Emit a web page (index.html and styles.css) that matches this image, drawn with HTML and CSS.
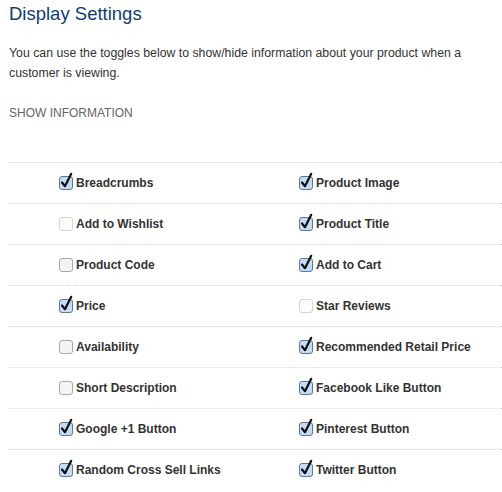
FILE: index.html
```html
<!DOCTYPE html>
<html>
<head>
<meta charset="utf-8">
<link rel="stylesheet" href="styles.css">
</head>
<body>
<div class="page">
  <h1 class="title">Display Settings</h1>
  <p class="intro">You can use the toggles below to show/hide information about your product when a customer is viewing.</p>
  <h2 class="section">SHOW INFORMATION</h2>
  <div class="options">
    <div class="row">
      <div class="cell"><span class="cb on"><svg viewBox="0 0 14 18" width="14" height="18"><rect x="0.5" y="4.5" width="13" height="13" rx="2.5" class="box"/><path d="M3 10.5 L6 14.2 L12.2 1.8" class="tick"/></svg></span>Breadcrumbs</div>
      <div class="cell"><span class="cb on"><svg viewBox="0 0 14 18" width="14" height="18"><rect x="0.5" y="4.5" width="13" height="13" rx="2.5" class="box"/><path d="M3 10.5 L6 14.2 L12.2 1.8" class="tick"/></svg></span>Product Image</div>
    </div>
    <div class="row">
      <div class="cell"><span class="cb dis"><svg viewBox="0 0 14 18" width="14" height="18"><rect x="0.5" y="4.5" width="13" height="13" rx="2.5" class="box"/></svg></span>Add to Wishlist</div>
      <div class="cell"><span class="cb on"><svg viewBox="0 0 14 18" width="14" height="18"><rect x="0.5" y="4.5" width="13" height="13" rx="2.5" class="box"/><path d="M3 10.5 L6 14.2 L12.2 1.8" class="tick"/></svg></span>Product Title</div>
    </div>
    <div class="row">
      <div class="cell"><span class="cb off"><svg viewBox="0 0 14 18" width="14" height="18"><rect x="0.5" y="4.5" width="13" height="13" rx="2.5" class="box"/></svg></span>Product Code</div>
      <div class="cell"><span class="cb on"><svg viewBox="0 0 14 18" width="14" height="18"><rect x="0.5" y="4.5" width="13" height="13" rx="2.5" class="box"/><path d="M3 10.5 L6 14.2 L12.2 1.8" class="tick"/></svg></span>Add to Cart</div>
    </div>
    <div class="row">
      <div class="cell"><span class="cb on"><svg viewBox="0 0 14 18" width="14" height="18"><rect x="0.5" y="4.5" width="13" height="13" rx="2.5" class="box"/><path d="M3 10.5 L6 14.2 L12.2 1.8" class="tick"/></svg></span>Price</div>
      <div class="cell"><span class="cb dis"><svg viewBox="0 0 14 18" width="14" height="18"><rect x="0.5" y="4.5" width="13" height="13" rx="2.5" class="box"/></svg></span>Star Reviews</div>
    </div>
    <div class="row">
      <div class="cell"><span class="cb off"><svg viewBox="0 0 14 18" width="14" height="18"><rect x="0.5" y="4.5" width="13" height="13" rx="2.5" class="box"/></svg></span>Availability</div>
      <div class="cell"><span class="cb on"><svg viewBox="0 0 14 18" width="14" height="18"><rect x="0.5" y="4.5" width="13" height="13" rx="2.5" class="box"/><path d="M3 10.5 L6 14.2 L12.2 1.8" class="tick"/></svg></span>Recommended Retail Price</div>
    </div>
    <div class="row">
      <div class="cell"><span class="cb off"><svg viewBox="0 0 14 18" width="14" height="18"><rect x="0.5" y="4.5" width="13" height="13" rx="2.5" class="box"/></svg></span>Short Description</div>
      <div class="cell"><span class="cb on"><svg viewBox="0 0 14 18" width="14" height="18"><rect x="0.5" y="4.5" width="13" height="13" rx="2.5" class="box"/><path d="M3 10.5 L6 14.2 L12.2 1.8" class="tick"/></svg></span>Facebook Like Button</div>
    </div>
    <div class="row">
      <div class="cell"><span class="cb on"><svg viewBox="0 0 14 18" width="14" height="18"><rect x="0.5" y="4.5" width="13" height="13" rx="2.5" class="box"/><path d="M3 10.5 L6 14.2 L12.2 1.8" class="tick"/></svg></span>Google +1 Button</div>
      <div class="cell"><span class="cb on"><svg viewBox="0 0 14 18" width="14" height="18"><rect x="0.5" y="4.5" width="13" height="13" rx="2.5" class="box"/><path d="M3 10.5 L6 14.2 L12.2 1.8" class="tick"/></svg></span>Pinterest Button</div>
    </div>
    <div class="row">
      <div class="cell"><span class="cb on"><svg viewBox="0 0 14 18" width="14" height="18"><rect x="0.5" y="4.5" width="13" height="13" rx="2.5" class="box"/><path d="M3 10.5 L6 14.2 L12.2 1.8" class="tick"/></svg></span>Random Cross Sell Links</div>
      <div class="cell"><span class="cb on"><svg viewBox="0 0 14 18" width="14" height="18"><rect x="0.5" y="4.5" width="13" height="13" rx="2.5" class="box"/><path d="M3 10.5 L6 14.2 L12.2 1.8" class="tick"/></svg></span>Twitter Button</div>
    </div>
  </div>
</div>
</body>
</html>
```
FILE: styles.css
```css
html, body {
  margin: 0;
  padding: 0;
  background: #fff;
}
.page {
  padding: 0 0 0 9px;
  font-family: "Liberation Sans", Arial, sans-serif;
  color: #333;
}
.title {
  margin: 0;
  padding-top: 3px;
  font-size: 18.5px;
  line-height: 22px;
  font-weight: normal;
  color: #0f3c6f;
}
.intro {
  margin: 18px 0 0 0;
  font-size: 12.3px;
  line-height: 20px;
  padding-right: 20px;
}
.section {
  margin: 20px 0 0 0;
  font-size: 12px;
  line-height: 20px;
  font-weight: normal;
  color: #666;
}
.options {
  margin-top: 39px;
  border-top: 1px dotted #d6d6d6;
}
.row {
  display: grid;
  grid-template-columns: 240px 1fr;
  height: 40px;
  align-items: center;
  border-bottom: 1px dotted #d6d6d6;
}
.row:last-child {
  border-bottom: none;
}
.cell {
  display: flex;
  align-items: center;
  padding-left: 50px;
  font-size: 12px;
  font-weight: bold;
  color: #333;
}
.cb {
  display: inline-flex;
  width: 14px;
  height: 18px;
  margin-right: 3px;
  margin-top: -5px;
}
.cb svg {
  overflow: visible;
}
.cb .box {
  fill: #f4f4f4;
  stroke: #a9a9a9;
  stroke-width: 1;
}
.cb.dis .box {
  fill: #fbfbfb;
  stroke: #d4d4d4;
}
.cb.on .box {
  fill: #c5dcf5;
  stroke: #5b7898;
}
.cb .tick {
  fill: none;
  stroke: #111;
  stroke-width: 2.2;
  stroke-linecap: round;
  stroke-linejoin: round;
}
```
